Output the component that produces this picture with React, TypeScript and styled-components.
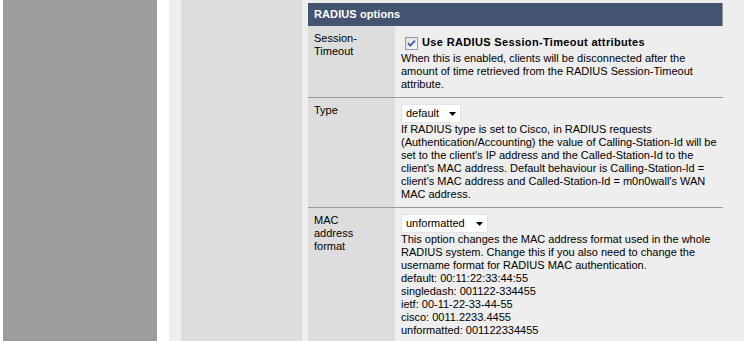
import React from "react";
import styled, { createGlobalStyle } from "styled-components";

const GlobalStyle = createGlobalStyle`
  html, body {
    margin: 0;
    padding: 0;
    background: #ffffff;
  }
  body {
    font-family: "Liberation Sans", Arial, sans-serif;
    font-size: 11px;
    color: #000000;
  }
`;

const Page = styled.div`
  display: flex;
  height: 341px;
  overflow: hidden;
`;

const NavColumn = styled.div`
  width: 154px;
  margin-left: 3px;
  background: #9d9d9d;
`;

const Rail = styled.div`
  width: 12px;
  margin-left: 12px;
  background: #eeeeee;
`;

const SideBox = styled.div`
  width: 121px;
  background: #dddddd;
`;

const Content = styled.div`
  flex: 1;
  background: #eeeeee;
  padding: 3px 0 0 6px;
`;

const OptionsTable = styled.div`
  width: 415px;
`;

const Topic = styled.div`
  background: #435370;
  color: #ffffff;
  font-weight: bold;
  line-height: 13px;
  letter-spacing: 0.1px;
  padding: 5px 16px 5px 6px;
  border-right: 1px solid #999999;
`;

const Row = styled.div`
  display: flex;
`;

const LabelCell = styled.div`
  width: 87px;
  flex: none;
  box-sizing: border-box;
  padding: 6px 30px 6px 6px;
  background: #dddddd;
  border-bottom: 1px solid #999999;
  line-height: 13px;
`;

const ValueCell = styled.div`
  flex: 1;
  padding: 6px 4px 6px 6px;
  border-bottom: 1px solid #999999;
  line-height: 13px;
`;

const CheckLine = styled.label`
  display: flex;
  align-items: center;
  height: 20px;
  font-weight: bold;
  letter-spacing: 0.35px;
`;

const CheckBox = styled.span`
  display: inline-flex;
  width: 13px;
  height: 13px;
  margin: 2px 4px 0 4px;
`;

const SelectBox = styled.div<{ $width: number }>`
  display: flex;
  align-items: center;
  justify-content: space-between;
  box-sizing: border-box;
  width: ${({ $width }) => $width}px;
  height: 19px;
  padding: 0 4px;
  background: #ffffff;
  border: 1px solid #e4e4e4;
`;

const Help = styled.div`
  line-height: 13px;
`;

const Checkmark: React.FC = () => (
  <CheckBox>
    <svg width="13" height="13" viewBox="0 0 13 13">
      <defs>
        <linearGradient id="cbfill" x1="0" y1="0" x2="1" y2="1">
          <stop offset="0" stopColor="#dcdcd7" />
          <stop offset="1" stopColor="#ffffff" />
        </linearGradient>
      </defs>
      <rect x="0.5" y="0.5" width="12" height="12" fill="url(#cbfill)" stroke="#8a9bb6" />
      <path d="M3 6.2 L5.2 8.6 L10 3.6" fill="none" stroke="#4b55c6" strokeWidth="1.8" />
    </svg>
  </CheckBox>
);

const Select: React.FC<{ value: string; width: number }> = ({ value, width }) => (
  <SelectBox $width={width}>
    <span>{value}</span>
    <svg width="7" height="4" viewBox="0 0 7 4">
      <polygon points="0,0 7,0 3.5,4" fill="#000000" />
    </svg>
  </SelectBox>
);

export default function App() {
  return (
    <>
      <GlobalStyle />
      <Page>
        <NavColumn />
        <Rail />
        <SideBox />
        <Content>
          <OptionsTable>
            <Topic>RADIUS options</Topic>
            <Row>
              <LabelCell>Session-Timeout</LabelCell>
              <ValueCell>
                <CheckLine>
                  <Checkmark />
                  Use RADIUS Session-Timeout attributes
                </CheckLine>
                <Help>
                  When this is enabled, clients will be disconnected after the amount of time
                  retrieved from the RADIUS Session-Timeout attribute.
                </Help>
              </ValueCell>
            </Row>
            <Row>
              <LabelCell>Type</LabelCell>
              <ValueCell>
                <Select value="default" width={60} />
                <Help>
                  If RADIUS type is set to Cisco, in RADIUS requests (Authentication/Accounting)
                  the value of Calling-Station-Id will be set to the client's IP address and the
                  Called-Station-Id to the client's MAC address. Default behaviour is
                  Calling-Station-Id = client's MAC address and Called-Station-Id = m0n0wall's
                  WAN MAC address.
                </Help>
              </ValueCell>
            </Row>
            <Row>
              <LabelCell>MAC address format</LabelCell>
              <ValueCell>
                <Select value="unformatted" width={87} />
                <Help>
                  This option changes the MAC address format used in the whole RADIUS system.
                  Change this if you also need to change the username format for RADIUS MAC
                  authentication.
                  <br />
                  default: 00:11:22:33:44:55
                  <br />
                  singledash: 001122-334455
                  <br />
                  ietf: 00-11-22-33-44-55
                  <br />
                  cisco: 0011.2233.4455
                  <br />
                  unformatted: 001122334455
                </Help>
              </ValueCell>
            </Row>
          </OptionsTable>
        </Content>
      </Page>
    </>
  );
}
